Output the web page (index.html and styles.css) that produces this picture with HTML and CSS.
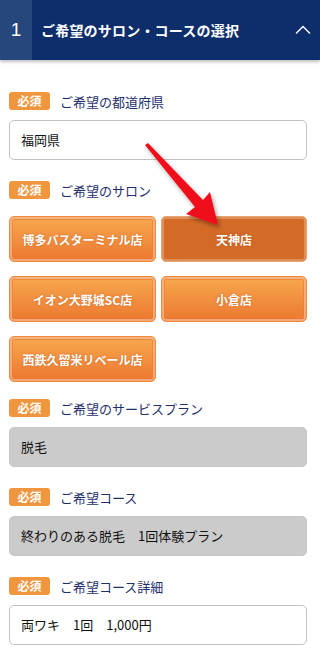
FILE: index.html
```html
<!DOCTYPE html>
<html lang="ja">
<head>
    <meta charset="UTF-8">
    <meta name="viewport" content="width=device-width, initial-scale=1.0">
    <title>ご希望のサロン・コースの選択</title>
    <link rel="stylesheet" href="styles.css">
</head>
<body>

    <div class="step-header">
        <span class="step-num">1</span>
        <span class="step-title">ご希望のサロン・コースの選択</span>
        <svg class="step-toggle" width="16" height="10" viewBox="0 0 16 10">
            <polyline points="1,8.5 8,1.5 15,8.5" fill="none" stroke="#fff" stroke-width="1.4"/>
        </svg>
    </div>

    <div class="form-body">
        <!-- 都道府県 -->
        <div class="field">
            <div class="field-label"><span class="badge">必須</span>ご希望の都道府県</div>
            <div class="input">福岡県</div>
        </div>

        <!-- サロン -->
        <div class="field salon-field">
            <div class="field-label"><span class="badge">必須</span>ご希望のサロン</div>
            <div class="salon-list">
                <button class="salon-btn">博多バスターミナル店</button>
                <button class="salon-btn selected">天神店</button>
                <button class="salon-btn">イオン大野城SC店</button>
                <button class="salon-btn">小倉店</button>
                <button class="salon-btn">西鉄久留米リベール店</button>
            </div>
        </div>

        <div class="field">
            <div class="field-label"><span class="badge">必須</span>ご希望のサービスプラン</div>
            <div class="input disabled">脱毛</div>
        </div>

        <div class="field">
            <div class="field-label"><span class="badge">必須</span>ご希望コース</div>
            <div class="input disabled">終わりのある脱毛　1回体験プラン</div>
        </div>

        <div class="field">
            <div class="field-label"><span class="badge">必須</span>ご希望コース詳細</div>
            <div class="input">両ワキ　1回　1,000円</div>
        </div>

        <!-- annotation arrow -->
        <svg class="pointer" width="100" height="100" viewBox="0 0 100 100">
            <defs>
                <filter id="shade" x="-20%" y="-20%" width="140%" height="140%">
                    <feDropShadow dx="2" dy="3" stdDeviation="2" flood-color="#000" flood-opacity="0.35"/>
                </filter>
            </defs>
            <polygon points="5,5 8,3 63,60 70,52 78,85 46,74 55,67" fill="#f0101a" filter="url(#shade)"/>
        </svg>
    </div>

</body>
</html>
```

FILE: styles.css
```css
body {
    margin: 0;
    font-family: "Noto Sans CJK JP", "Liberation Sans", sans-serif;
    background-color: #fff;
    color: #222;
}
.step-header {
    display: flex;
    align-items: center;
    height: 60px;
    background-color: #0d2e6b;
    color: #fff;
    box-shadow: 0 2px 3px rgba(0, 0, 0, 0.25);
}
.step-num {
    width: 32px;
    height: 100%;
    display: flex;
    align-items: center;
    justify-content: center;
    background-color: #27467c;
    font-family: "Liberation Sans", sans-serif;
    font-size: 19px;
}
.step-title {
    flex: 1;
    margin-left: 9px;
    font-size: 14px;
    font-weight: bold;
    letter-spacing: 0.2px;
}
.step-toggle {
    margin-right: 9px;
}
.form-body {
    position: relative;
    padding: 32px 13px 0 9px;
}
.field {
    margin-bottom: 21px;
}
.salon-field {
    margin-bottom: 17px;
}
.field-label {
    display: flex;
    align-items: center;
    height: 18px;
    font-size: 13px;
    color: #1f2f6e;
    margin-bottom: 10px;
}
.badge {
    width: 41px;
    height: 18px;
    line-height: 18px;
    text-align: center;
    background-color: #f0963e;
    color: #fff;
    font-size: 12px;
    font-weight: bold;
    border-radius: 3px;
    margin-right: 10px;
}
.input {
    height: 38px;
    line-height: 38px;
    padding: 0 11px;
    border: 1px solid #c2c2c2;
    border-radius: 5px;
    font-size: 13px;
    color: #111;
    background-color: #fff;
}
.input.disabled {
    background-color: #cbcbcb;
    border-color: #c6c6c6;
}
.salon-list {
    display: grid;
    grid-template-columns: 147px 146px;
    column-gap: 5px;
    row-gap: 14px;
    padding-top: 7px;
}
.salon-btn {
    height: 46px;
    padding: 0;
    border: 1px solid #ee8a3c;
    border-radius: 5px;
    background: linear-gradient(#f7a84e, #ec7831);
    box-shadow: inset 0 0 0 2px rgba(255, 255, 255, 0.35), inset 0 0 0 3px rgba(236, 120, 49, 0.6);
    color: #fff;
    font-family: "Noto Sans CJK JP", "Liberation Sans", sans-serif;
    font-size: 12px;
    font-weight: bold;
    text-shadow: 0 0 2px rgba(160, 70, 20, 0.5);
    cursor: pointer;
}
.salon-btn.selected {
    background: #d46a27;
    border-color: #e9a36d;
    box-shadow: inset 0 0 0 2px rgba(255, 255, 255, 0.25), inset 0 0 0 3px rgba(212, 106, 39, 0.8);
}
.pointer {
    position: absolute;
    left: 140px;
    top: 80px;
}
```
